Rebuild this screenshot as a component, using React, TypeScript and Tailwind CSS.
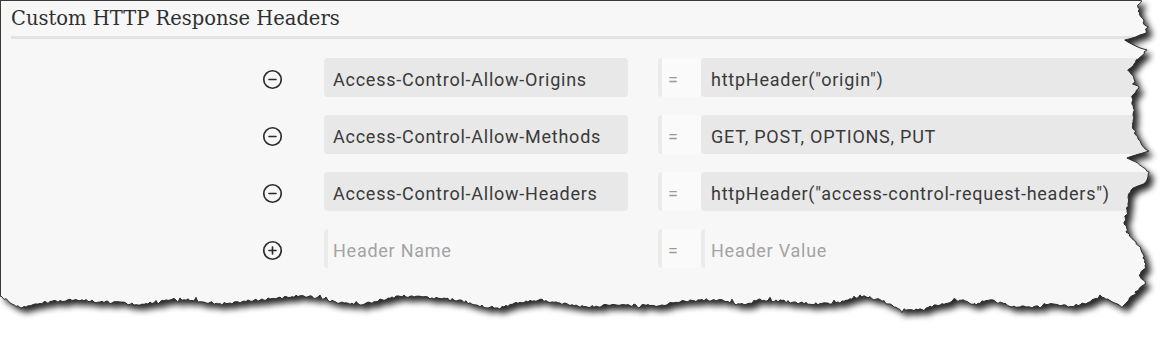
import { CircleMinus, CirclePlus } from "lucide-react";

type Row = { name: string; value: string };

const rows: Row[] = [
  { name: "Access-Control-Allow-Origins", value: 'httpHeader("origin")' },
  { name: "Access-Control-Allow-Methods", value: "GET, POST, OPTIONS, PUT" },
  { name: "Access-Control-Allow-Headers", value: 'httpHeader("access-control-request-headers")' },
];

// torn paper edge, anchors picked off the screenshot
const rightEdge: [number, number][] = [
  [0, 1141], [5, 1138], [15, 1140], [25, 1145], [33, 1146], [37, 1136], [40, 1125], [44, 1131],
  [50, 1146], [53, 1144], [60, 1136], [70, 1129], [78, 1133], [88, 1138], [96, 1131], [110, 1133],
  [125, 1133], [135, 1136], [145, 1142], [151, 1148], [155, 1136], [158, 1127], [163, 1138],
  [172, 1148], [182, 1147], [190, 1130], [200, 1128], [212, 1127], [222, 1124], [232, 1127],
  [240, 1134], [247, 1140], [258, 1144], [266, 1146], [275, 1140], [284, 1145], [292, 1136],
  [300, 1128], [307, 1122],
];

const bottomEdge: [number, number][] = [
  [1122, 307], [1110, 300], [1100, 296], [1090, 302], [1070, 307], [1050, 303], [1030, 308],
  [1010, 306], [990, 300], [975, 304], [960, 300], [940, 304], [920, 309], [900, 310], [880, 300],
  [860, 296], [840, 302], [820, 304], [800, 303], [780, 301], [760, 300], [740, 305], [720, 300],
  [700, 300], [680, 302], [660, 305], [640, 306], [620, 304], [600, 306], [580, 307], [560, 303],
  [540, 300], [520, 302], [500, 308], [480, 306], [460, 300], [440, 299], [420, 297], [400, 296],
  [380, 300], [360, 305], [340, 303], [320, 298], [300, 296], [280, 298], [260, 300], [240, 302],
  [220, 304], [200, 301], [180, 299], [160, 301], [140, 305], [120, 303], [100, 302], [80, 300],
  [60, 301], [40, 303], [20, 308], [10, 302], [0, 296],
];

function rng(seed: number) {
  let a = seed;
  return () => {
    a |= 0;
    a = (a + 0x6d2b79f5) | 0;
    let t = Math.imul(a ^ (a >>> 15), 1 | a);
    t = (t + Math.imul(t ^ (t >>> 7), 61 | t)) ^ t;
    return ((t ^ (t >>> 14)) >>> 0) / 4294967296;
  };
}

function buildEdge() {
  const r = rng(7);
  const jit = () => (r() - 0.5) * 2.6 + (r() < 0.1 ? (r() - 0.5) * 6 : 0);
  const pts: string[] = [];
  for (let i = 0; i < rightEdge.length - 1; i++) {
    const [y0, x0] = rightEdge[i];
    const [y1, x1] = rightEdge[i + 1];
    for (let y = y0; y < y1; y += 2) {
      const x = x0 + ((x1 - x0) * (y - y0)) / (y1 - y0);
      pts.push(`${(x + (y === 0 ? 0 : jit())).toFixed(1)},${y}`);
    }
  }
  for (let i = 0; i < bottomEdge.length - 1; i++) {
    const [x0, y0] = bottomEdge[i];
    const [x1, y1] = bottomEdge[i + 1];
    for (let x = x0; x > x1; x -= 2) {
      const y = y0 + ((y1 - y0) * (x - x0)) / (x1 - x0);
      pts.push(`${x},${(y + jit()).toFixed(1)}`);
    }
  }
  pts.push("0,296");
  return "M" + pts.join(" L");
}

const edge = buildEdge();
const paper = "M0,0 L" + edge.slice(1) + " Z";
const outside = "M0,0 H1171 V338 H0 Z " + paper;

function TornEdge() {
  return (
    <svg className="absolute inset-0 pointer-events-none" width="1171" height="338">
      <defs>
        <filter id="blur" x="-10%" y="-10%" width="120%" height="120%">
          <feGaussianBlur stdDeviation="3" />
        </filter>
        <clipPath id="out">
          <path d={outside} clipRule="evenodd" />
        </clipPath>
      </defs>
      <path d={outside} fill="#ffffff" fillRule="evenodd" />
      <g clipPath="url(#out)">
        <path d={paper} fill="#000" opacity="0.85" filter="url(#blur)" transform="translate(5,5)" />
      </g>
      <path d={edge} fill="none" stroke="#2e2e2e" strokeWidth="1" />
    </svg>
  );
}

function EqCell() {
  return (
    <div className="w-[43px] h-[39px] shrink-0 rounded bg-[#fafafa] border-l-4 border-[#ebebeb] flex items-center pl-[6px] pt-[3px] text-[18px] text-[#9a9a9a]">
      =
    </div>
  );
}

export default function App() {
  return (
    <div className="relative w-[1171px] h-[338px] bg-white overflow-hidden" style={{ fontFamily: "Roboto, sans-serif" }}>
      <div className="h-full bg-[#f7f7f7] border-t border-l border-[#3a3a3a]">
        <div className="pl-[10px] pt-[5px]">
          <h1 className="text-[19.5px] leading-[25px] text-[#2f2f2f]" style={{ fontFamily: '"DejaVu Serif", serif' }}>
            Custom HTTP Response Headers
          </h1>
          <div className="mt-[5px] h-[3px] bg-[#e3e3e3]" />
        </div>

        <div className="mt-[19px] flex flex-col gap-[18px]">
          {rows.map((row) => (
            <div key={row.name} className="flex items-center h-[39px]">
              <div className="w-[323px] shrink-0 flex justify-end pr-[41px] pt-[3px]">
                <CircleMinus size={21} strokeWidth={1.9} color="#2b2b2b" />
              </div>
              <div className="w-[304px] h-[39px] shrink-0 rounded bg-[#e8e8e8] flex items-center pl-[9px] pt-[4px] text-[18px] tracking-[0.75px] text-[#3a3a3a]">
                {row.name}
              </div>
              <div className="w-[30px] shrink-0" />
              <EqCell />
              <div className="w-[480px] h-[39px] shrink-0 rounded bg-[#e8e8e8] flex items-center pl-[10px] pt-[4px] text-[18px] tracking-[0.75px] text-[#3a3a3a]">
                {row.value}
              </div>
            </div>
          ))}

          <div className="flex items-center h-[39px]">
            <div className="w-[323px] shrink-0 flex justify-end pr-[41px] pt-[3px]">
              <CirclePlus size={21} strokeWidth={1.9} color="#2b2b2b" />
            </div>
            <div className="w-[304px] h-[39px] shrink-0 rounded border-l-4 border-[#ebebeb] flex items-center pl-[5px] pt-[4px] text-[18px] tracking-[0.75px] text-[#a3a3a3]">
              Header Name
            </div>
            <div className="w-[30px] shrink-0" />
            <EqCell />
            <div className="w-[480px] h-[39px] shrink-0 rounded border-l-4 border-[#ebebeb] flex items-center pl-[6px] pt-[4px] text-[18px] tracking-[0.75px] text-[#a3a3a3]">
              Header Value
            </div>
          </div>
        </div>
      </div>
      <TornEdge />
    </div>
  );
}
